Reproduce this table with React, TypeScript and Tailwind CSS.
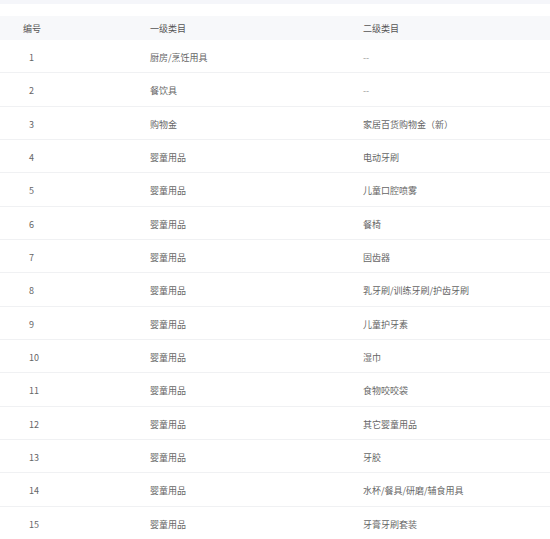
const rows: [string, string, string][] = [
  ['1', '厨房/烹饪用具', '--'],
  ['2', '餐饮具', '--'],
  ['3', '购物金', '家居百货购物金（新）'],
  ['4', '婴童用品', '电动牙刷'],
  ['5', '婴童用品', '儿童口腔喷雾'],
  ['6', '婴童用品', '餐椅'],
  ['7', '婴童用品', '固齿器'],
  ['8', '婴童用品', '乳牙刷/训练牙刷/护齿牙刷'],
  ['9', '婴童用品', '儿童护牙素'],
  ['10', '婴童用品', '湿巾'],
  ['11', '婴童用品', '食物咬咬袋'],
  ['12', '婴童用品', '其它婴童用品'],
  ['13', '婴童用品', '牙胶'],
  ['14', '婴童用品', '水杯/餐具/研磨/辅食用具'],
  ['15', '婴童用品', '牙膏牙刷套装'],
]

export default function App() {
  return (
    <div
      className="w-[550px] h-[539px] overflow-hidden bg-white text-[9px] text-[#666]"
      style={{ fontFamily: '"Noto Sans CJK SC", "Noto Sans", sans-serif' }}
    >
      <div className="h-[4px] bg-[#f5f6fa]" />
      <div className="h-[12px]" />

      {/* Header */}
      <div className="flex h-[24px] items-center bg-[#f7f8fa] pt-[2px] text-[#555]">
        <div className="w-[150px] pl-[23px]">编号</div>
        <div className="w-[213px]">一级类目</div>
        <div className="flex-1">二级类目</div>
      </div>

      {/* Rows */}
      {rows.map(([id, first, second]) => (
        <div key={id} className="flex h-[33.33px] items-center border-b border-[#f0f1f3] pt-[3px]">
          <div className="w-[150px] pl-[29px]">{id}</div>
          <div className="w-[213px]">{first}</div>
          <div className={second === '--' ? 'flex-1 text-[#999]' : 'flex-1'}>{second}</div>
        </div>
      ))}
    </div>
  )
}
